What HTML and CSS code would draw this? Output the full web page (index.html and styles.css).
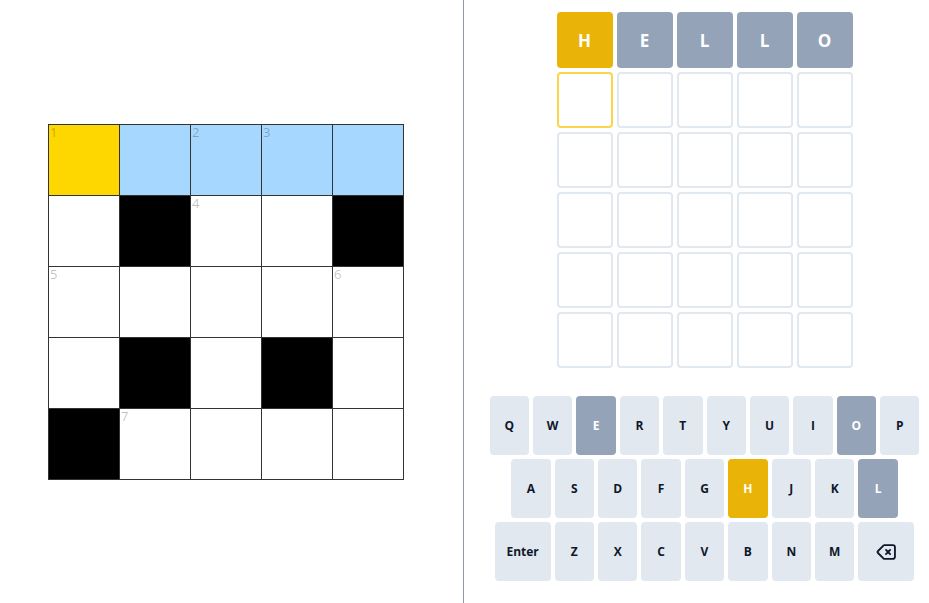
FILE: index.html
```html
<!DOCTYPE html>
<html lang="en">
<head>
  <meta charset="UTF-8" />
  <meta name="viewport" content="width=device-width, initial-scale=1.0" />
  <title>Crossword Wordle</title>
  <link rel="stylesheet" href="styles.css">
</head>
<body>
  <div class="page">
    <!-- Crossword -->
    <div class="left-panel">
      <div class="crossword">
        <div class="cell active"><span class="num">1</span></div>
        <div class="cell hl"></div>
        <div class="cell hl"><span class="num">2</span></div>
        <div class="cell hl"><span class="num">3</span></div>
        <div class="cell hl"></div>

        <div class="cell"></div>
        <div class="cell block"></div>
        <div class="cell"><span class="num">4</span></div>
        <div class="cell"></div>
        <div class="cell block"></div>

        <div class="cell"><span class="num">5</span></div>
        <div class="cell"></div>
        <div class="cell"></div>
        <div class="cell"></div>
        <div class="cell"><span class="num">6</span></div>

        <div class="cell"></div>
        <div class="cell block"></div>
        <div class="cell"></div>
        <div class="cell block"></div>
        <div class="cell"></div>

        <div class="cell block"></div>
        <div class="cell"><span class="num">7</span></div>
        <div class="cell"></div>
        <div class="cell"></div>
        <div class="cell"></div>
      </div>
    </div>

    <!-- Wordle -->
    <div class="right-panel">
      <div class="board">
        <div class="tile present">H</div>
        <div class="tile absent">E</div>
        <div class="tile absent">L</div>
        <div class="tile absent">L</div>
        <div class="tile absent">O</div>

        <div class="tile current"></div>
        <div class="tile"></div>
        <div class="tile"></div>
        <div class="tile"></div>
        <div class="tile"></div>

        <div class="tile"></div><div class="tile"></div><div class="tile"></div><div class="tile"></div><div class="tile"></div>
        <div class="tile"></div><div class="tile"></div><div class="tile"></div><div class="tile"></div><div class="tile"></div>
        <div class="tile"></div><div class="tile"></div><div class="tile"></div><div class="tile"></div><div class="tile"></div>
        <div class="tile"></div><div class="tile"></div><div class="tile"></div><div class="tile"></div><div class="tile"></div>
      </div>

      <div class="keyboard">
        <div class="kb-row">
          <button class="key">Q</button>
          <button class="key">W</button>
          <button class="key absent">E</button>
          <button class="key">R</button>
          <button class="key">T</button>
          <button class="key">Y</button>
          <button class="key">U</button>
          <button class="key">I</button>
          <button class="key absent">O</button>
          <button class="key">P</button>
        </div>
        <div class="kb-row">
          <button class="key">A</button>
          <button class="key">S</button>
          <button class="key">D</button>
          <button class="key">F</button>
          <button class="key">G</button>
          <button class="key present">H</button>
          <button class="key">J</button>
          <button class="key">K</button>
          <button class="key absent">L</button>
        </div>
        <div class="kb-row">
          <button class="key wide">Enter</button>
          <button class="key">Z</button>
          <button class="key">X</button>
          <button class="key">C</button>
          <button class="key">V</button>
          <button class="key">B</button>
          <button class="key">N</button>
          <button class="key">M</button>
          <button class="key wide" aria-label="Backspace">
            <svg width="22" height="22" viewBox="0 0 24 24" fill="none" stroke="currentColor" stroke-width="2" stroke-linecap="round" stroke-linejoin="round">
              <path d="M12 9.75 14.25 12m0 0 2.25 2.25M14.25 12l2.25-2.25M14.25 12 12 14.25m-2.58 4.92-6.374-6.375a1.125 1.125 0 0 1 0-1.59L9.42 4.83c.21-.211.497-.33.795-.33H19.5a2.25 2.25 0 0 1 2.25 2.25v10.5a2.25 2.25 0 0 1-2.25 2.25h-9.284c-.298 0-.585-.119-.795-.33Z"/>
            </svg>
          </button>
        </div>
      </div>
    </div>
  </div>
</body>
</html>
```

FILE: styles.css
```css
* {
  box-sizing: border-box;
  font-family: "Open Sans", "Noto Sans", sans-serif;
}
body {
  margin: 0;
  background-color: white;
}
.page {
  display: flex;
  height: 603px;
}
.left-panel {
  width: 464px;
  border-right: 1px solid #8f9aa8;
  display: flex;
  align-items: center;
  padding-left: 48px;
  padding-top: 1px;
}
.crossword {
  display: grid;
  grid-template-columns: repeat(5, 71px);
  grid-template-rows: repeat(5, 71px);
  border-left: 1px solid #333;
  border-top: 1px solid #333;
}
.cell {
  position: relative;
  border-right: 1px solid #333;
  border-bottom: 1px solid #333;
  background: white;
}
.cell.active {
  background-color: #ffd700;
}
.cell.hl {
  background-color: #a6d8ff;
}
.cell.block {
  background-color: black;
}
.num {
  position: absolute;
  top: 0;
  left: 1px;
  font-size: 13px;
  line-height: 15px;
  color: rgba(0, 0, 0, 0.25);
}
.right-panel {
  flex: 1;
  display: flex;
  flex-direction: column;
  align-items: center;
  padding-left: 16px;
  padding-top: 12px;
}
.board {
  display: grid;
  grid-template-columns: repeat(5, 56px);
  grid-auto-rows: 56px;
  gap: 4px;
}
.tile {
  border: 2px solid #e2e8f0;
  border-radius: 4px;
  display: flex;
  align-items: center;
  justify-content: center;
  font-size: 17px;
  font-weight: 700;
  color: white;
}
.tile.current {
  border-color: #fcd34d;
}
.tile.present {
  background-color: #eab308;
  border-color: #eab308;
}
.tile.absent {
  background-color: #94a3b8;
  border-color: #94a3b8;
}
.keyboard {
  margin-top: 28px;
  display: flex;
  flex-direction: column;
  gap: 4px;
}
.kb-row {
  display: flex;
  justify-content: center;
  gap: 4px;
}
.key {
  width: 39.4px;
  height: 59px;
  border: none;
  border-radius: 4px;
  background-color: #e2e8f0;
  color: #0f172a;
  font-size: 12px;
  font-weight: 700;
  padding: 0;
  display: flex;
  align-items: center;
  justify-content: center;
  cursor: pointer;
}
.key.wide {
  width: 56px;
}
.key.absent {
  background-color: #94a3b8;
  color: white;
}
.key.present {
  background-color: #eab308;
  color: white;
}
```
